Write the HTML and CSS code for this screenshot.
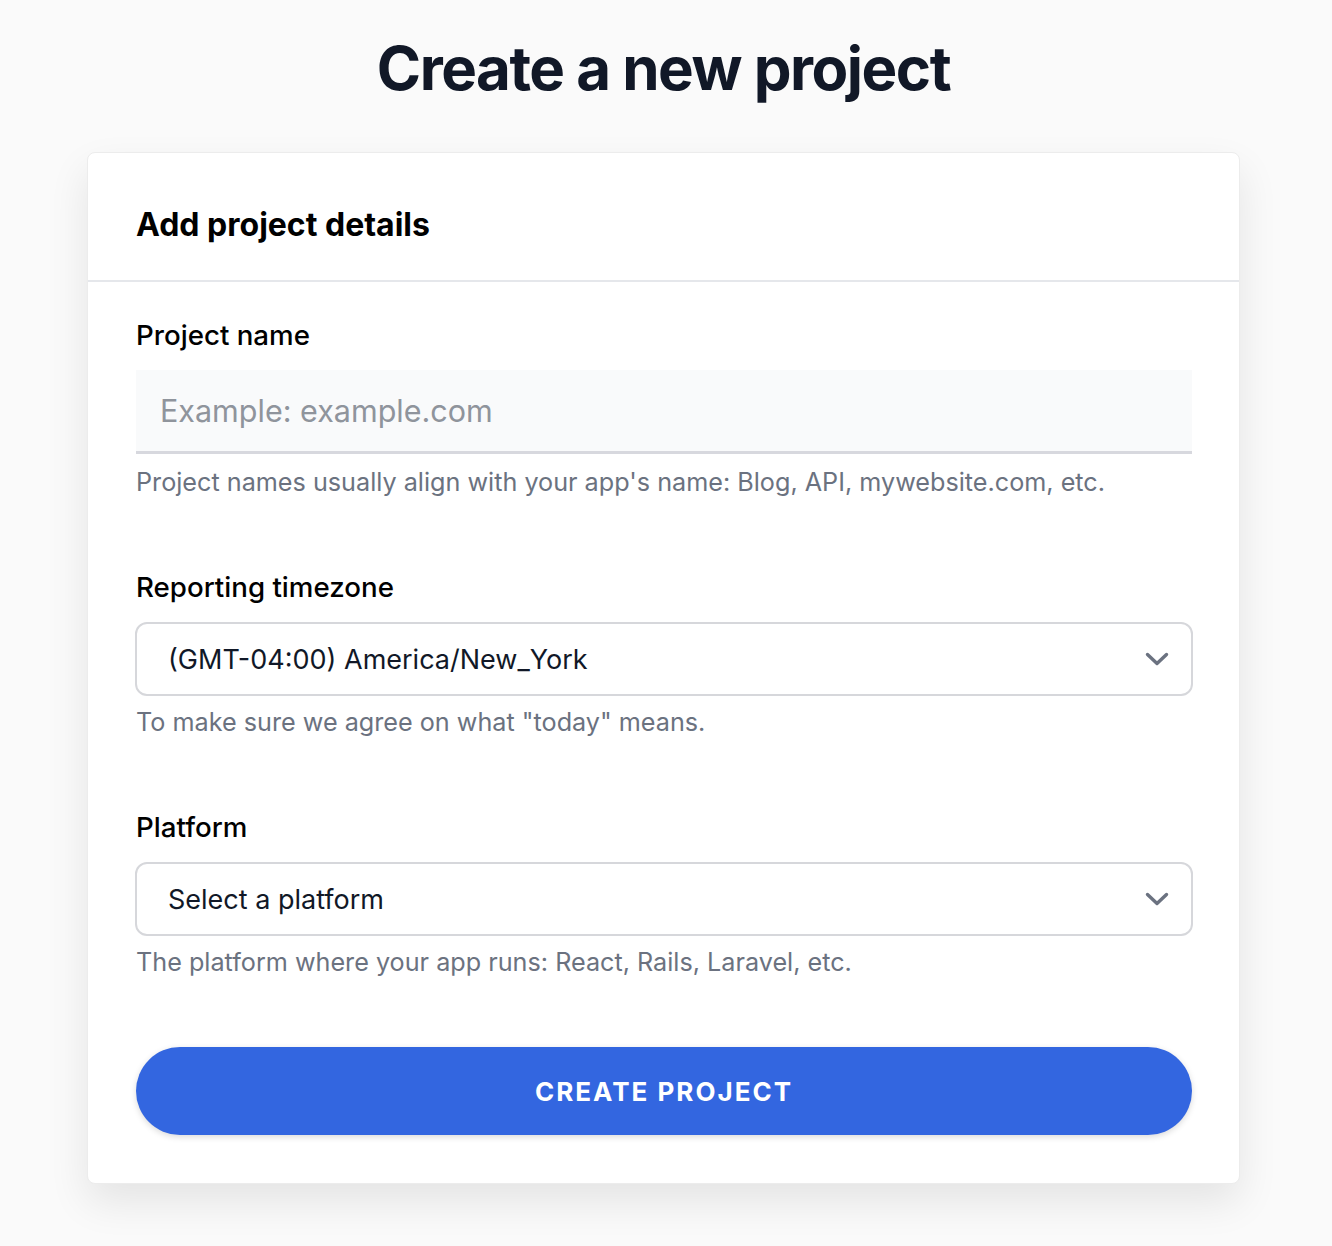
FILE: index.html
```html
<!DOCTYPE html>
<html lang="en">
<head>
    <meta charset="UTF-8">
    <title>Create a new project</title>
    <link rel="stylesheet" href="styles.css">
</head>
<body>
<div class="page">
    <h1 class="title">Create a new project</h1>
    <div class="card">
        <div class="card-head">
            <h2>Add project details</h2>
        </div>
        <form class="card-body">
            <div class="field">
                <label class="label" for="name">Project name</label>
                <input class="text-input" id="name" type="text" placeholder="Example: example.com">
                <p class="help help-input">Project names usually align with your app's name: Blog, API, mywebsite.com, etc.</p>
            </div>
            <div class="field">
                <label class="label">Reporting timezone</label>
                <div class="select">
                    <span>(GMT-04:00) America/New_York</span>
                    <svg class="chevron" viewBox="0 0 24 14" width="24" height="14"><path d="M2.5 2.5L12 11.5 21.5 2.5" fill="none" stroke="#6b7280" stroke-width="3.4" stroke-linecap="round" stroke-linejoin="round"/></svg>
                </div>
                <p class="help">To make sure we agree on what "today" means.</p>
            </div>
            <div class="field field-last">
                <label class="label">Platform</label>
                <div class="select">
                    <span>Select a platform</span>
                    <svg class="chevron" viewBox="0 0 24 14" width="24" height="14"><path d="M2.5 2.5L12 11.5 21.5 2.5" fill="none" stroke="#6b7280" stroke-width="3.4" stroke-linecap="round" stroke-linejoin="round"/></svg>
                </div>
                <p class="help">The platform where your app runs: React, Rails, Laravel, etc.</p>
            </div>
            <button class="btn" type="button">Create project</button>
        </form>
    </div>
</div>
</body>
</html>
```

FILE: styles.css
```css
* {
    margin: 0;
    padding: 0;
    box-sizing: border-box;
}
body {
    background: #fafafa;
    font-family: Inter, "Noto Sans", sans-serif;
    color: #111;
}
.page {
    width: 1153px;
    margin-left: 87px;
    padding-top: 34px;
    padding-bottom: 60px;
}
.title {
    text-align: center;
    font-size: 60px;
    font-weight: 700;
    letter-spacing: -1.5px;
    color: #111827;
    line-height: 68px;
    margin-bottom: 50px;
}
.card {
    background: #fff;
    border: 1px solid #ececec;
    border-radius: 8px;
    box-shadow: 0 18px 40px rgba(0, 0, 0, 0.09);
}
.card-head {
    padding: 54px 48px 37px;
    border-bottom: 2px solid #e5e7eb;
}
.card-head h2 {
    font-size: 32px;
    line-height: 36px;
    font-weight: 700;
    color: #000;
}
.card-body {
    padding: 37px 47px 48px 48px;
}
.field {
    margin-bottom: 74px;
}
.field-last {
    margin-bottom: 70px;
}
.label {
    display: block;
    font-size: 27.7px;
    font-weight: 500;
    line-height: 32px;
    color: #000;
    margin-bottom: 19px;
}
.text-input {
    display: block;
    width: 100%;
    height: 84px;
    border: 0;
    border-bottom: 3px solid #d7d8de;
    background: #f9fafb;
    padding: 0 24px;
    font-family: inherit;
    font-size: 30.5px;
    color: #111;
    outline: none;
}
.text-input::placeholder {
    color: #8f949c;
}
.select {
    display: flex;
    align-items: center;
    justify-content: space-between;
    height: 74px;
    margin: 0 -1px;
    border: 2px solid #d6d7db;
    border-radius: 12px;
    padding: 0 22px 0 31px;
    font-size: 27px;
    color: #111827;
}
.help {
    font-size: 25.2px;
    line-height: 30px;
    color: #6b7280;
    margin-top: 11px;
}
.help-input {
    margin-top: 13px;
}
.btn {
    display: block;
    width: 100%;
    height: 88px;
    border: 0;
    border-radius: 44px;
    background: #3366e0;
    color: #fff;
    font-family: inherit;
    font-size: 26px;
    font-weight: 700;
    letter-spacing: 2px;
    text-transform: uppercase;
    box-shadow: 0 2px 6px rgba(0, 0, 0, 0.15);
    cursor: pointer;
}
```
